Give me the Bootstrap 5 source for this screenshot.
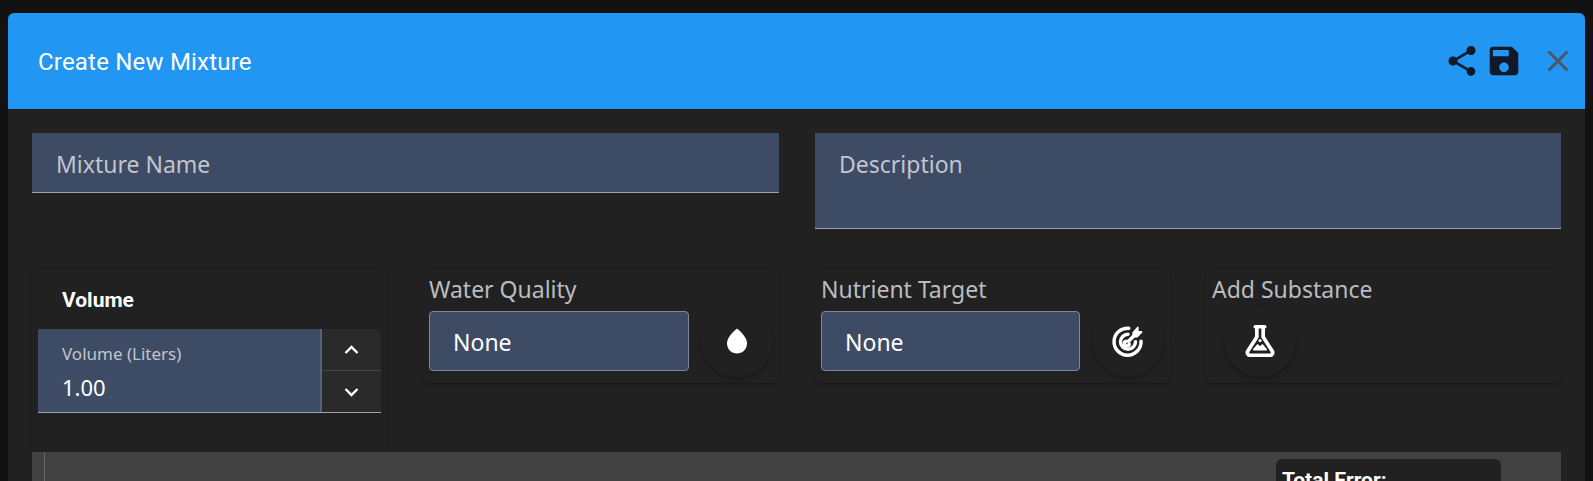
<!DOCTYPE html>
<html lang="en"><head><meta charset="utf-8"><title>Create New Mixture</title>
<link href="https://cdn.jsdelivr.net/npm/bootstrap@5.3.0/dist/css/bootstrap.min.css" rel="stylesheet">
<style>
html,body{height:481px;overflow:hidden}
body{background:#121212;padding:13px 8px 0;font-family:Roboto,sans-serif}
.dlg{background:#212121;border-radius:6px 6px 0 0;height:468px;overflow:hidden}
.dlg-head{background:#2196f3;height:96px;padding:0 9px 0 30px}
.dlg-title{color:#fff;font:400 24px/1 Roboto,sans-serif;letter-spacing:.2px;margin:2px 0 0}
.ico-dark{fill:#111827;display:block}
.ico-close{fill:#4b5563;display:block}
.icon-bar{margin-top:-1px}
.gap-save{margin-left:5px}
.gap-close{margin-left:17px}
.dlg-body{padding:24px 24px 0}
.top-row{display:grid;grid-template-columns:747px 746px;column-gap:36px;height:135px}
.fld{background:#3e4b64;border:0;border-bottom:1px solid #9ca3af;color:#c1c5cc;font:23px/1.2 "Noto Sans",sans-serif;padding:18px 24px 0;border-radius:0;display:block}
.fld-name{height:60px}
.fld-desc{height:96px}
.tile-row{display:grid;grid-template-columns:355px 356px 355px 355px;column-gap:36px;align-items:start}
.tile{background:#212121;border-radius:6px;box-shadow:0 1px 3px rgba(0,0,0,.35);height:115px;padding:8px 6px 0}
.tile-vol{height:184px;padding:0 6px}
.vol-title{color:#fff;font:700 21px/1 Roboto,sans-serif;padding:22px 24px 0;height:61px}
.vol-box{display:flex;height:84px;border-bottom:1px solid #9ca3af}
.vol-in{background:#3e4b64;width:284px;padding:15px 24px 0;border-right:2px solid #55627c}
.vol-lab{color:#c1c5cc;font:17px/1.2 "Noto Sans",sans-serif;margin-bottom:10px}
.vol-val{color:#fff;font:22px/1.2 "Noto Sans",sans-serif}
.spin{background:#2a2a2a;flex:1;border-radius:0 6px 0 0;display:flex;flex-direction:column}
.spin-b{flex:1;display:flex;align-items:center;justify-content:center}
.spin-b+.spin-b{border-top:1px solid #474747}
.tile-lab{color:#b9bcc1;font:23px/1.2 "Noto Sans",sans-serif;height:35px}
.sel{background:#3e4b64;border:1px solid #7d869a;border-radius:4px;color:#fff;width:260px;height:60px;font:23px/60px "Noto Sans",sans-serif;padding-left:23px}
.rnd{width:72px;height:72px;border-radius:50%;background:#212121;box-shadow:0 2px 4px rgba(0,0,0,.3);margin:-6px 0 0 12px;flex:none;display:flex;align-items:center;justify-content:center}
.chart-strip{background:#424242;height:60px;position:relative;overflow:hidden}
.axis-line{width:1px;height:100%;background:#666;margin-left:12px}
.tip{position:absolute;left:1244px;top:7px;width:225px;height:60px;background:#212121;border-radius:6px;color:#fff;font:700 21px/1 Roboto,sans-serif;padding:11px 6px 0}
</style></head>
<body>
<div class="dlg">
  <div class="dlg-head d-flex align-items-center justify-content-between">
    <h2 class="dlg-title">Create New Mixture</h2>
    <div class="d-flex align-items-center icon-bar">
      <svg class="ico-dark" width="36" height="36" viewBox="0 0 24 24"><path d="M18 16.08c-.76 0-1.44.3-1.96.77L8.91 12.7c.05-.23.09-.46.09-.7s-.04-.47-.09-.7l7.05-4.11c.54.5 1.25.81 2.04.81 1.66 0 3-1.34 3-3s-1.34-3-3-3-3 1.34-3 3c0 .24.04.47.09.7L8.04 9.81C7.5 9.31 6.79 9 6 9c-1.66 0-3 1.34-3 3s1.34 3 3 3c.79 0 1.5-.31 2.04-.81l7.12 4.16c-.05.21-.08.43-.08.65 0 1.61 1.31 2.92 2.92 2.92 1.61 0 2.92-1.31 2.92-2.92s-1.31-2.92-2.92-2.92z"/></svg>
      <svg class="ico-dark gap-save" width="38" height="38" viewBox="0 0 24 24"><path d="M17 3H5c-1.11 0-2 .9-2 2v14c0 1.1.89 2 2 2h14c1.1 0 2-.9 2-2V7l-4-4zm-5 16c-1.66 0-3-1.34-3-3s1.34-3 3-3 3 1.34 3 3-1.34 3-3 3zm3-10H5V5h10v4z"/></svg>
      <svg class="ico-close gap-close" width="36" height="36" viewBox="0 0 24 24"><path d="M19 6.41 17.59 5 12 10.59 6.41 5 5 6.41 10.59 12 5 17.59 6.41 19 12 13.41 17.59 19 19 17.59 13.41 12z"/></svg>
    </div>
  </div>
  <div class="dlg-body">
    <div class="top-row">
      <div><div class="fld fld-name">Mixture Name</div></div>
      <div><div class="fld fld-desc">Description</div></div>
    </div>
    <div class="tile-row">
      <div class="tile tile-vol">
        <div class="vol-title">Volume</div>
        <div class="vol-box">
          <div class="vol-in"><div class="vol-lab">Volume (Liters)</div><div class="vol-val">1.00</div></div>
          <div class="spin">
            <div class="spin-b"><svg width="15" height="10" viewBox="0 0 15 10"><path d="M1.5 8 7.5 2l6 6" fill="none" stroke="#fff" stroke-width="2.4"/></svg></div>
            <div class="spin-b"><svg width="15" height="10" viewBox="0 0 15 10"><path d="M1.5 2l6 6 6-6" fill="none" stroke="#fff" stroke-width="2.4"/></svg></div>
          </div>
        </div>
      </div>
      <div class="tile">
        <div class="tile-lab">Water Quality</div>
        <div class="d-flex"><div class="sel">None</div>
          <div class="rnd"><svg width="30" height="30" viewBox="0 0 24 24" fill="#fff"><path d="M12 2c-5.33 4.55-8 8.48-8 11.8 0 4.98 3.8 8.2 8 8.2s8-3.22 8-8.2c0-3.32-2.67-7.25-8-11.8z"/></svg></div></div>
      </div>
      <div class="tile">
        <div class="tile-lab">Nutrient Target</div>
        <div class="d-flex"><div class="sel">None</div>
          <div class="rnd"><svg width="36" height="36" viewBox="0 0 24 24" fill="none" stroke="#fff" stroke-width="2.3" stroke-linecap="round" stroke-linejoin="round"><path d="M11 12.200a1.600 1.600 0 1 0 1.800 1.600"/><path d="M12 7.500a5 5 0 1 0 5 5"/><path d="M12.500 3.500a9 9 0 1 0 8.200 8.600"/><path d="M15.500 6.500v2.500h2.500l3-3h-2.500V3z" fill="#fff" stroke-width="1.200"/><path d="M16 8.500l-3.500 3.500"/></svg></div></div>
      </div>
      <div class="tile">
        <div class="tile-lab">Add Substance</div>
        <div class="d-flex"><div class="rnd"><svg width="38" height="38" viewBox="0 0 24 24" fill="none" stroke="#fff" stroke-width="2.300" stroke-linecap="round" stroke-linejoin="round"><path d="M9 3h6M10 3v6.500L4.200 18.500A1.700 1.700 0 0 0 5.700 21h12.600a1.700 1.700 0 0 0 1.500-2.500L14 9.500V3"/><path d="M8 17.500l2.500-3 1.500 1.500 1.500-1.500 2.500 3z" fill="#fff" stroke-width="1"/><circle cx="12" cy="11.800" r=".7" fill="#fff" stroke-width=".6"/></svg></div></div>
      </div>
    </div>
    <div class="chart-strip"><div class="axis-line"></div><div class="tip">Total Error:</div></div>
  </div>
</div>
</body></html>
